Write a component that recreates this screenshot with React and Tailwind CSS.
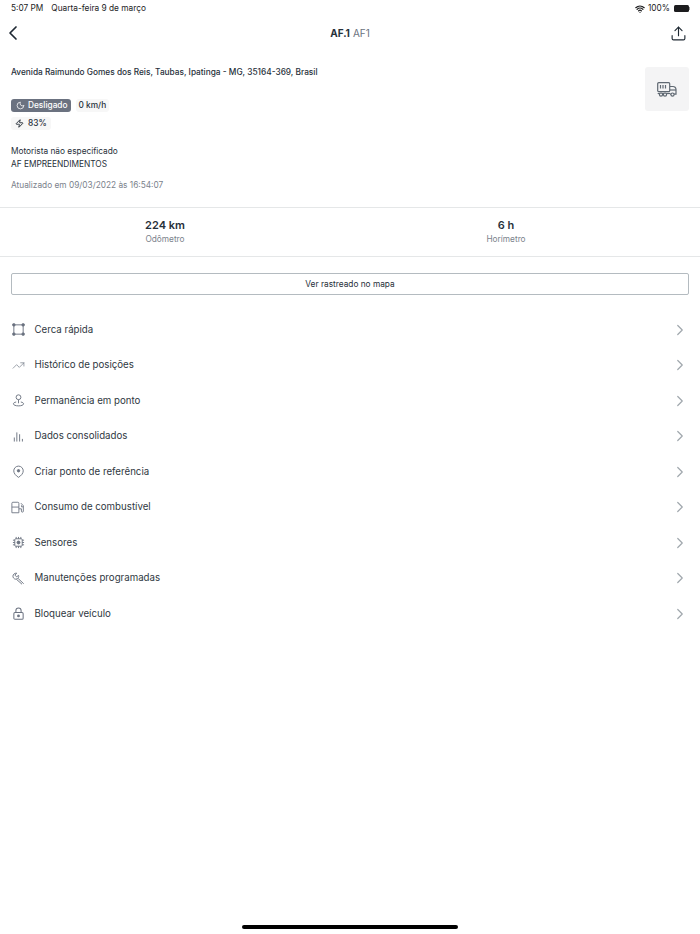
import React from 'react';
import { ChevronLeft, ChevronRight, Upload, Moon, Zap, TrendingUp, Wifi } from 'lucide-react';

/* ================= CUSTOM ICONS ================= */
const FenceIcon = ({ className }) => (
  <svg viewBox="0 0 14 14" fill="none" stroke="currentColor" strokeWidth="1" className={className}>
    <rect x="2" y="2" width="10" height="10" />
    <rect x="0.8" y="0.8" width="2.4" height="2.4" fill="currentColor" rx="0.5" />
    <rect x="10.8" y="0.8" width="2.4" height="2.4" fill="currentColor" rx="0.5" />
    <rect x="0.8" y="10.8" width="2.4" height="2.4" fill="currentColor" rx="0.5" />
    <rect x="10.8" y="10.8" width="2.4" height="2.4" fill="currentColor" rx="0.5" />
  </svg>
);

const PersonPinIcon = ({ className }) => (
  <svg viewBox="0 0 14 14" fill="none" stroke="currentColor" strokeWidth="1" className={className}>
    <circle cx="7" cy="3.5" r="2.6" />
    <path d="M7 6.1V10" />
    <path d="M4.5 8.6C2.6 9 1.5 9.7 1.5 10.6c0 1.3 2.5 2.2 5.5 2.2s5.5-.9 5.5-2.2c0-.9-1.1-1.6-3-2" />
  </svg>
);

const BarsIcon = ({ className }) => (
  <svg viewBox="0 0 14 14" fill="none" stroke="currentColor" strokeWidth="1" strokeLinecap="round" className={className}>
    <path d="M2.5 12V8.5" />
    <path d="M5.2 12V3" />
    <path d="M8.2 12V5" />
    <path d="M11.2 12V10" />
  </svg>
);

const PinIcon = ({ className }) => (
  <svg viewBox="0 0 14 14" fill="none" stroke="currentColor" strokeWidth="1" className={className}>
    <path d="M7 13.3C4 11.4 1.9 9 1.9 6.3a5.1 5.1 0 0 1 10.2 0C12.1 9 10 11.4 7 13.3Z" />
    <circle cx="7" cy="6.2" r="1.3" fill="currentColor" />
  </svg>
);

const FuelIcon = ({ className }) => (
  <svg viewBox="0 0 16 14" fill="none" stroke="currentColor" strokeWidth="1" className={className}>
    <path d="M1 13V2.2A1.2 1.2 0 0 1 2.2 1h5.6A1.2 1.2 0 0 1 9 2.2V13Z" />
    <path d="M1 6.5h8" />
    <path d="M11.3 2l2.8 3v6.2a1.1 1.1 0 0 1-2.2 0V8.5H9" />
    <path d="M12 4.5v1.7h2" />
  </svg>
);

const ChipIcon = ({ className }) => (
  <svg viewBox="0 0 14 14" fill="none" stroke="currentColor" strokeWidth="1" className={className}>
    <rect x="3" y="3" width="8" height="8" rx="1" />
    <circle cx="7" cy="7" r="1.6" fill="currentColor" />
    <path d="M1 4.5h2M1 7h2M1 9.5h2M11 4.5h2M11 7h2M11 9.5h2" />
    <path d="M4.5 1v2M7 1v2M9.5 1v2M4.5 11v2M7 11v2M9.5 11v2" />
  </svg>
);

const SpannerIcon = ({ className }) => (
  <svg viewBox="0 0 14 14" fill="none" stroke="currentColor" strokeWidth="1" strokeLinejoin="round" className={className}>
    <path d="M5 1.2 3.3 3.4l1.6 1.8 2.2-1.5c.5 1.6-.4 3.6-2.5 3.9l-1 .1C2 7.4 1 5.9 1 4.5c0-1.8 1.8-3.4 4-3.3Z" />
    <path d="M6.6 7 12.6 12.6" />
    <path d="M4.8 7.9 10.8 13.2" />
  </svg>
);

const LockIcon = ({ className }) => (
  <svg viewBox="0 0 14 14" fill="none" stroke="currentColor" strokeWidth="1.1" className={className}>
    <rect x="2" y="6" width="10" height="7.2" rx="1.2" />
    <path d="M4.2 6V3.8a2.8 2.8 0 0 1 5.6 0V6" />
    <circle cx="7" cy="9.6" r="0.9" fill="currentColor" />
  </svg>
);

const TruckIcon = ({ className }) => (
  <svg viewBox="0 0 20 15" fill="none" stroke="currentColor" strokeWidth="1.2" className={className}>
    <rect x="0.7" y="0.7" width="12" height="9" rx="1" />
    <path d="M3.5 3v3.5M6 3v3.5M8.5 3v3.5" />
    <path d="M0.7 11.5h12.3" />
    <path d="M13 4.5h2.8a3 3 0 0 1 3.2 3v4.6h-6" />
    <path d="M13 8h6" />
    <circle cx="4" cy="12.6" r="1.6" fill="#f4f4f5" />
    <circle cx="8" cy="12.6" r="1.6" fill="#f4f4f5" />
    <circle cx="15.5" cy="12.6" r="1.6" fill="#f4f4f5" />
  </svg>
);

const MENU = [
  { label: 'Cerca rápida', Icon: FenceIcon, size: 'w-[13px] h-[13px]' },
  { label: 'Histórico de posições', Icon: TrendingUp, size: 'w-[13px] h-[13px]' },
  { label: 'Permanência em ponto', Icon: PersonPinIcon, size: 'w-[13px] h-[13px]' },
  { label: 'Dados consolidados', Icon: BarsIcon, size: 'w-[13px] h-[13px]' },
  { label: 'Criar ponto de referência', Icon: PinIcon, size: 'w-[13px] h-[13px]' },
  { label: 'Consumo de combustível', Icon: FuelIcon, size: 'w-[14px] h-[13px]' },
  { label: 'Sensores', Icon: ChipIcon, size: 'w-[13px] h-[13px]' },
  { label: 'Manutenções programadas', Icon: SpannerIcon, size: 'w-[13px] h-[13px]' },
  { label: 'Bloquear veículo', Icon: LockIcon, size: 'w-[13px] h-[13px]' },
];

const App = () => {
  return (
    <div className="relative w-[700px] h-[934px] overflow-hidden bg-white text-[#27303a] font-['Inter',sans-serif]">
      {/* STATUS BAR */}
      <div className="flex items-center justify-between h-4 pl-[11px] pr-[10px] pt-px text-[8.3px] text-[#1c1c1e]">
        <div className="flex gap-[8px]">
          <span>5:07 PM</span>
          <span>Quarta-feira 9 de março</span>
        </div>
        <div className="flex items-center gap-[3px]">
          <Wifi className="w-[10px] h-[10px]" strokeWidth={3} />
          <span>100%</span>
          <div className="flex items-center ml-px">
            <div className="w-[15px] h-[7px] rounded-[1.5px] bg-[#1c1c1e]" />
            <div className="w-px h-[3px] bg-[#9a9a9a]" />
          </div>
        </div>
      </div>

      {/* NAV BAR */}
      <div className="relative flex items-center justify-between h-[34px] pl-px pr-[13px]">
        <ChevronLeft className="w-6 h-6 text-[#1f2933]" strokeWidth={1.7} />
        <div className="absolute inset-0 flex items-center justify-center text-[10px]">
          <span className="font-bold">AF.1</span>
          <span className="ml-[3px] text-[#6b7280]">AF1</span>
        </div>
        <Upload className="w-[17px] h-[17px] text-[#1f2933]" strokeWidth={1.6} />
      </div>

      {/* VEHICLE INFO */}
      <div className="flex justify-between h-[157px] px-[11px]">
        <div className="flex flex-col pt-[17px]">
          <p className="text-[8.3px] leading-[11px] font-medium">
            Avenida Raimundo Gomes dos Reis, Taubas, Ipatinga - MG, 35164-369, Brasil
          </p>
          <div className="flex items-center gap-[5px] mt-[21px]">
            <span className="flex items-center gap-[3px] h-[13px] pl-[5px] pr-[3px] rounded-[3px] bg-[#6b7280] text-white text-[8.3px] font-medium">
              <Moon className="w-[9px] h-[9px]" strokeWidth={2} />
              Desligado
            </span>
            <span className="flex items-center h-[13px] px-[3px] rounded-[3px] bg-[#f7f7f7] text-[8.3px] font-medium">
              0 km/h
            </span>
          </div>
          <span className="flex items-center gap-[4px] self-start h-[13px] mt-[5px] px-[4px] rounded-[3px] bg-[#f7f7f7] text-[8.3px] font-medium">
            <Zap className="w-[9px] h-[9px]" strokeWidth={2.5} />
            83%
          </span>
          <p className="mt-[15px] text-[8.3px] leading-[13px]">Motorista não especificado</p>
          <p className="text-[8.3px] leading-[13px]">AF EMPREENDIMENTOS</p>
          <p className="mt-[8px] text-[8.3px] leading-[13px] text-[#7b828c]">
            Atualizado em 09/03/2022 às 16:54:07
          </p>
        </div>
        <div className="flex items-center justify-center w-[44px] h-[44px] mt-[17px] rounded-[3px] bg-[#f4f4f5]">
          <TruckIcon className="w-[20px] h-[15px] text-[#5f6872]" />
        </div>
      </div>

      {/* STATS */}
      <div className="grid grid-cols-[330px_352px] h-[50px] border-y border-[#e5e7e8]">
        <div className="flex flex-col items-center justify-center">
          <span className="text-[11px] leading-[15px] font-semibold">224 km</span>
          <span className="text-[8.3px] leading-[13px] text-[#7b828c]">Odômetro</span>
        </div>
        <div className="flex flex-col items-center justify-center">
          <span className="text-[11px] leading-[15px] font-semibold">6 h</span>
          <span className="text-[8.3px] leading-[13px] text-[#7b828c]">Horímetro</span>
        </div>
      </div>

      {/* MAP BUTTON */}
      <div className="px-[11px] pt-4">
        <button className="flex items-center justify-center w-full h-[22px] rounded-[2px] border border-[#b4bbc0] text-[8.3px] font-normal">
          Ver rastreado no mapa
        </button>
      </div>

      {/* MENU */}
      <div className="flex flex-col pt-[17px]">
        {MENU.map(({ label, Icon, size }) => (
          <div key={label} className="flex items-center h-[35.5px] pl-[11px] pr-[11px]">
            <div className="flex items-center justify-center w-[14px] text-[#6b7280]">
              <Icon className={size} strokeWidth={1.2} />
            </div>
            <span className="ml-[9.5px] pt-px flex-1 text-[9.7px] text-[#2f3842]">{label}</span>
            <ChevronRight className="w-[18px] h-[18px] text-[#a0a7ad]" strokeWidth={1.6} />
          </div>
        ))}
      </div>

      {/* HOME INDICATOR */}
      <div className="absolute bottom-[5px] left-[242px] w-[216px] h-[4px] rounded-full bg-black" />
    </div>
  );
};

export default App;
